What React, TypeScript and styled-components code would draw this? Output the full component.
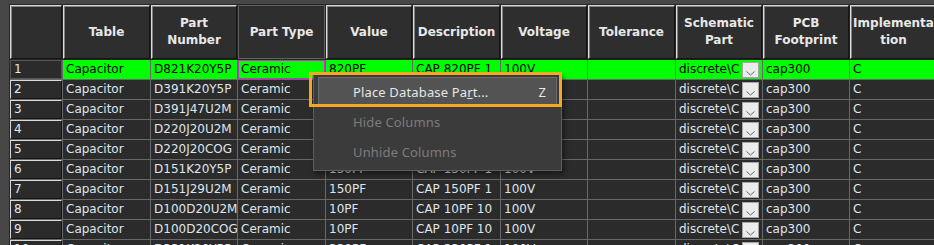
import styled, { createGlobalStyle } from 'styled-components'

const GlobalStyle = createGlobalStyle`
  html, body {
    margin: 0;
    padding: 0;
    background: #474747;
    overflow: hidden;
  }
  #root {
    width: 934px;
    height: 245px;
    overflow: hidden;
  }
`

const COLS = '52px 87px 86px 87px 86px 87px 86px 87px 86px 86px 87px'

const Frame = styled.div`
  position: relative;
  width: 934px;
  height: 245px;
  box-sizing: border-box;
  padding: 4px 0 0 9px;
  background: #474747;
  overflow: hidden;
  font-family: 'DejaVu Sans', 'Liberation Sans', sans-serif;
`
const Sheet = styled.div`
  width: max-content;
  background: #252525;
  padding: 1px 0 0 1px;
`
const HeaderRow = styled.div`
  display: grid;
  grid-template-columns: ${COLS};
  column-gap: 1px;
  height: 54px;
`
const HeadCell = styled.div<{ $pressed?: boolean }>`
  box-sizing: border-box;
  display: flex;
  align-items: center;
  justify-content: center;
  text-align: center;
  background: #2e2e2e;
  color: #e8e8e8;
  font-size: 12px;
  font-weight: bold;
  line-height: 17px;
  white-space: nowrap;
  overflow: hidden;
  border: 1px solid;
  border-color: ${({ $pressed }) => ($pressed ? '#5e5e5e' : '#dcdcdc #141414 #141414 #dcdcdc')};
  box-shadow: ${({ $pressed }) => ($pressed ? 'none' : 'inset 1px 1px 0 #808080')};
`
const Body = styled.div`
  display: grid;
  grid-template-columns: ${COLS};
  grid-auto-rows: 19px;
  gap: 1px;
  margin-top: 1px;
  background: #686868;
`
const RowHead = styled.div<{ $pressed?: boolean }>`
  box-sizing: border-box;
  background: #2b2b2b;
  color: #e4e8ef;
  font-size: 12px;
  line-height: 17px;
  padding-left: 3px;
  border: 1px solid;
  border-color: ${({ $pressed }) => ($pressed ? '#555555' : '#d8d8d8 #151515 #151515 #d8d8d8')};
`
const Cell = styled.div<{ $hot?: boolean; $focus?: boolean }>`
  display: flex;
  align-items: center;
  background: ${({ $hot }) => ($hot ? '#00ff00' : '#2b2b2b')};
  color: ${({ $hot }) => ($hot ? '#000000' : '#dfe5ee')};
  font-size: 12px;
  line-height: 19px;
  padding-left: 3px;
  white-space: nowrap;
  overflow: hidden;
  box-shadow: ${({ $focus }) => ($focus ? 'inset 0 0 0 1px #d42ad4' : 'none')};
`
const CellText = styled.span`
  flex: 1;
  min-width: 0;
  overflow: hidden;
  margin-right: 2px;
`
const DropButton = styled.span`
  flex: none;
  box-sizing: border-box;
  width: 17px;
  height: 16px;
  margin: 1px 3px 0 0;
  background: #ebebeb;
  border: 1px solid #a6a6a6;
  display: flex;
`
const Menu = styled.div`
  position: absolute;
  left: 313px;
  top: 73px;
  width: 249px;
  box-sizing: border-box;
  padding: 3px 4px;
  background: #3b3b3b;
  border: 1px solid #5e5e5e;
  box-shadow: 2px 3px 5px rgba(0, 0, 0, 0.45);
  font-family: 'Noto Sans', 'Open Sans', sans-serif;
  font-size: 13px;
  letter-spacing: 0.15px;
`
const MenuItem = styled.div<{ $disabled?: boolean; $active?: boolean }>`
  display: flex;
  align-items: center;
  height: 30px;
  box-sizing: border-box;
  padding: 0 10px 0 34px;
  color: ${({ $disabled }) => ($disabled ? '#7c7c7c' : '#e6e6e6')};
  background: ${({ $active }) => ($active ? '#535353' : 'transparent')};
  border: 1px solid ${({ $active }) => ($active ? '#6c6c6c' : 'transparent')};
`
const MenuLabel = styled.span`
  flex: 1;
`
const Mnemonic = styled.u`
  text-decoration-thickness: 1px;
`
const Callout = styled.div`
  position: absolute;
  left: 309px;
  top: 72px;
  width: 253px;
  height: 35px;
  box-sizing: border-box;
  border: 3px solid #f5a623;
  pointer-events: none;
`

const headers = [
  '',
  'Table',
  'Part\nNumber',
  'Part Type',
  'Value',
  'Description',
  'Voltage',
  'Tolerance',
  'Schematic\nPart',
  'PCB\nFootprint',
  'Implementa\ntion',
]

const rows = [
  ['D821K20Y5P', '820PF', 'CAP 820PF 1'],
  ['D391K20Y5P', '390PF', 'CAP 390PF 1'],
  ['D391J47U2M', '390PF', 'CAP 390PF 5'],
  ['D220J20U2M', '22PF', 'CAP 22PF 5%'],
  ['D220J20COG', '22PF', 'CAP 22PF 5%'],
  ['D151K20Y5P', '150PF', 'CAP 150PF 1'],
  ['D151J29U2M', '150PF', 'CAP 150PF 1'],
  ['D100D20U2M', '10PF', 'CAP 10PF 10'],
  ['D100D20COG', '10PF', 'CAP 10PF 10'],
  ['D331K20Y5P', '330PF', 'CAP 330PF 1'],
]

const Chevron = () => (
  <svg width="15" height="14" viewBox="0 0 15 14">
    <path d="M3.5 8.5 L7.5 12 L11.5 8.5" fill="none" stroke="#6a6a6a" strokeWidth="1" />
  </svg>
)

const App = () => {
  return (
    <Frame>
      <GlobalStyle />
      <Sheet>
        <HeaderRow>
          {headers.map((h, i) => (
            <HeadCell key={i} $pressed={i === 3}>
              <span>
                {h.split('\n').map((line, j) => (
                  <div key={j}>{line}</div>
                ))}
              </span>
            </HeadCell>
          ))}
        </HeaderRow>
        <Body>
          {rows.map(([part, value, desc], i) => {
            const hot = i === 0
            return [
              <RowHead key={`n${i}`} $pressed={hot}>{i + 1}</RowHead>,
              <Cell key={`t${i}`} $hot={hot}>Capacitor</Cell>,
              <Cell key={`p${i}`} $hot={hot}>{part}</Cell>,
              <Cell key={`y${i}`} $hot={hot} $focus={hot}>Ceramic</Cell>,
              <Cell key={`v${i}`} $hot={hot}>{value}</Cell>,
              <Cell key={`d${i}`} $hot={hot}>{desc}</Cell>,
              <Cell key={`g${i}`} $hot={hot}>100V</Cell>,
              <Cell key={`o${i}`} $hot={hot}></Cell>,
              <Cell key={`s${i}`} $hot={hot}>
                <CellText>discrete\C</CellText>
                <DropButton><Chevron /></DropButton>
              </Cell>,
              <Cell key={`f${i}`} $hot={hot}>cap300</Cell>,
              <Cell key={`i${i}`} $hot={hot}>C</Cell>,
            ]
          })}
        </Body>
      </Sheet>
      <Menu>
        <MenuItem $active>
          <MenuLabel>Place Database Pa<Mnemonic>r</Mnemonic>t...</MenuLabel>
          <span>Z</span>
        </MenuItem>
        <MenuItem $disabled>
          <MenuLabel>Hide Columns</MenuLabel>
        </MenuItem>
        <MenuItem $disabled>
          <MenuLabel>Unhide Columns</MenuLabel>
        </MenuItem>
      </Menu>
      <Callout />
    </Frame>
  )
}

export default App
